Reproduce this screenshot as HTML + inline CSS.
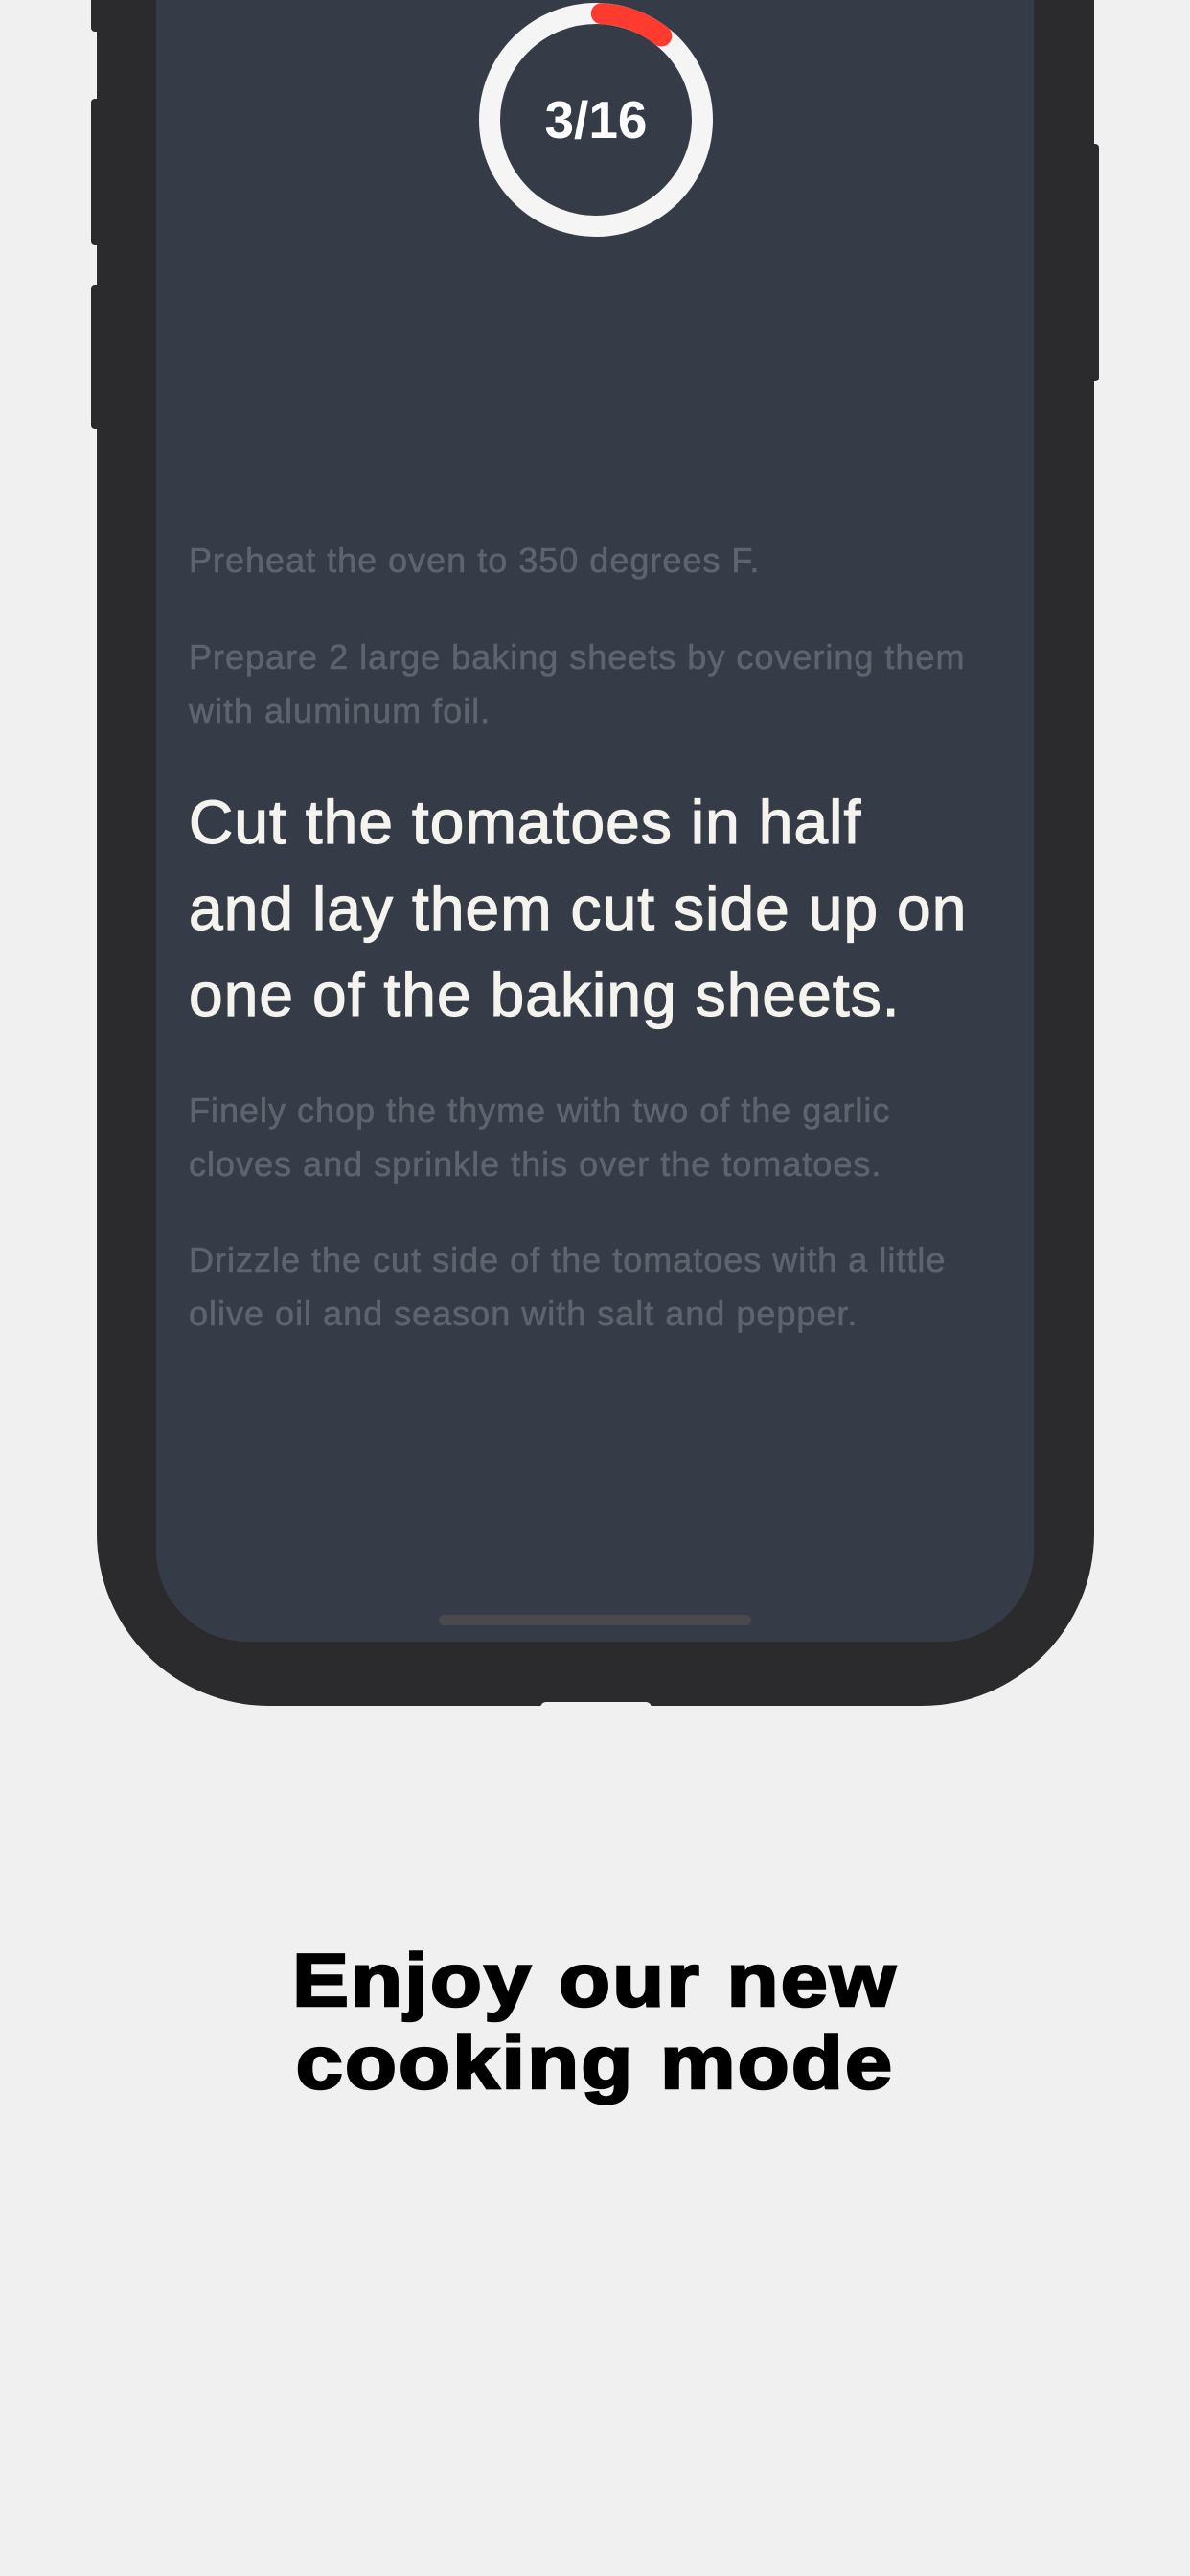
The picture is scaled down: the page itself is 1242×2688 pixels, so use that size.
<!DOCTYPE html>
<html><head><meta charset="utf-8"><style>
html,body{margin:0;padding:0}
body{width:1242px;height:2688px;background:#f0f0f0;position:relative;overflow:hidden;font-family:"Liberation Sans",sans-serif}
.a{position:absolute}
.g{position:absolute;left:197px;font-size:36px;line-height:56px;color:#5d646e;white-space:nowrap;letter-spacing:1px;-webkit-text-stroke:0.6px #5d646e}
.b{position:absolute;left:197px;font-size:64px;line-height:90px;color:#f5f3ee;white-space:nowrap;letter-spacing:1.1px;-webkit-text-stroke:1.2px #f5f3ee}
</style></head><body>
<div class="a" style="left:95px;top:0;width:12px;height:33px;background:#2b2b2d;border-radius:0 0 4px 4px"></div>
<div class="a" style="left:95px;top:103px;width:12px;height:153px;background:#2b2b2d;border-radius:4px"></div>
<div class="a" style="left:95px;top:297px;width:12px;height:151px;background:#2b2b2d;border-radius:4px"></div>
<div class="a" style="left:1136px;top:150px;width:11px;height:248px;background:#2b2b2d;border-radius:4px"></div>
<div class="a" style="left:101px;top:-200px;width:1041px;height:1980px;background:#2b2b2d;border-radius:0 0 180px 180px"></div>
<div class="a" style="left:564px;top:1776px;width:116px;height:6px;background:#f0f0f0;border-radius:6px 6px 0 0"></div>
<div class="a" style="left:163px;top:-100px;width:916px;height:1813px;background:#353c47;border-radius:0 0 95px 95px"></div>
<div class="a" style="left:458px;top:1685px;width:326px;height:11px;background:#4a4a4c;border-radius:6px"></div>
<svg class="a" style="left:0;top:0" width="1242" height="300">
<circle cx="622" cy="125" r="111" fill="none" stroke="#f5f5f5" stroke-width="22"/>
<path d="M627.8 14.2 A111 111 0 0 1 690.3 37.5" fill="none" stroke="#ff3b30" stroke-width="22" stroke-linecap="round"/>
</svg>
<div class="a" style="left:522px;top:95px;width:200px;height:60px;line-height:60px;text-align:center;color:#fff;font-size:55px;font-weight:bold">3/16</div>
<div class="g" style="top:557px">Preheat the oven to 350 degrees F.</div>
<div class="g" style="top:658px">Prepare 2 large baking sheets by covering them<br>with aluminum foil.</div>
<div class="b" style="top:813px">Cut the tomatoes in half<br>and lay them cut side up on<br>one of the baking sheets.</div>
<div class="g" style="top:1131px">Finely chop the thyme with two of the garlic<br>cloves and sprinkle this over the tomatoes.</div>
<div class="g" style="top:1287px">Drizzle the cut side of the tomatoes with a little<br>olive oil and season with salt and pepper.</div>
<div class="a" style="left:0;top:2023px;width:1242px;text-align:center;font-size:78px;line-height:86px;font-weight:bold;color:#000;letter-spacing:2px;-webkit-text-stroke:2.5px #000;transform:scaleX(1.13);transform-origin:621px 0">Enjoy our new<br>cooking mode</div>
</body></html>
